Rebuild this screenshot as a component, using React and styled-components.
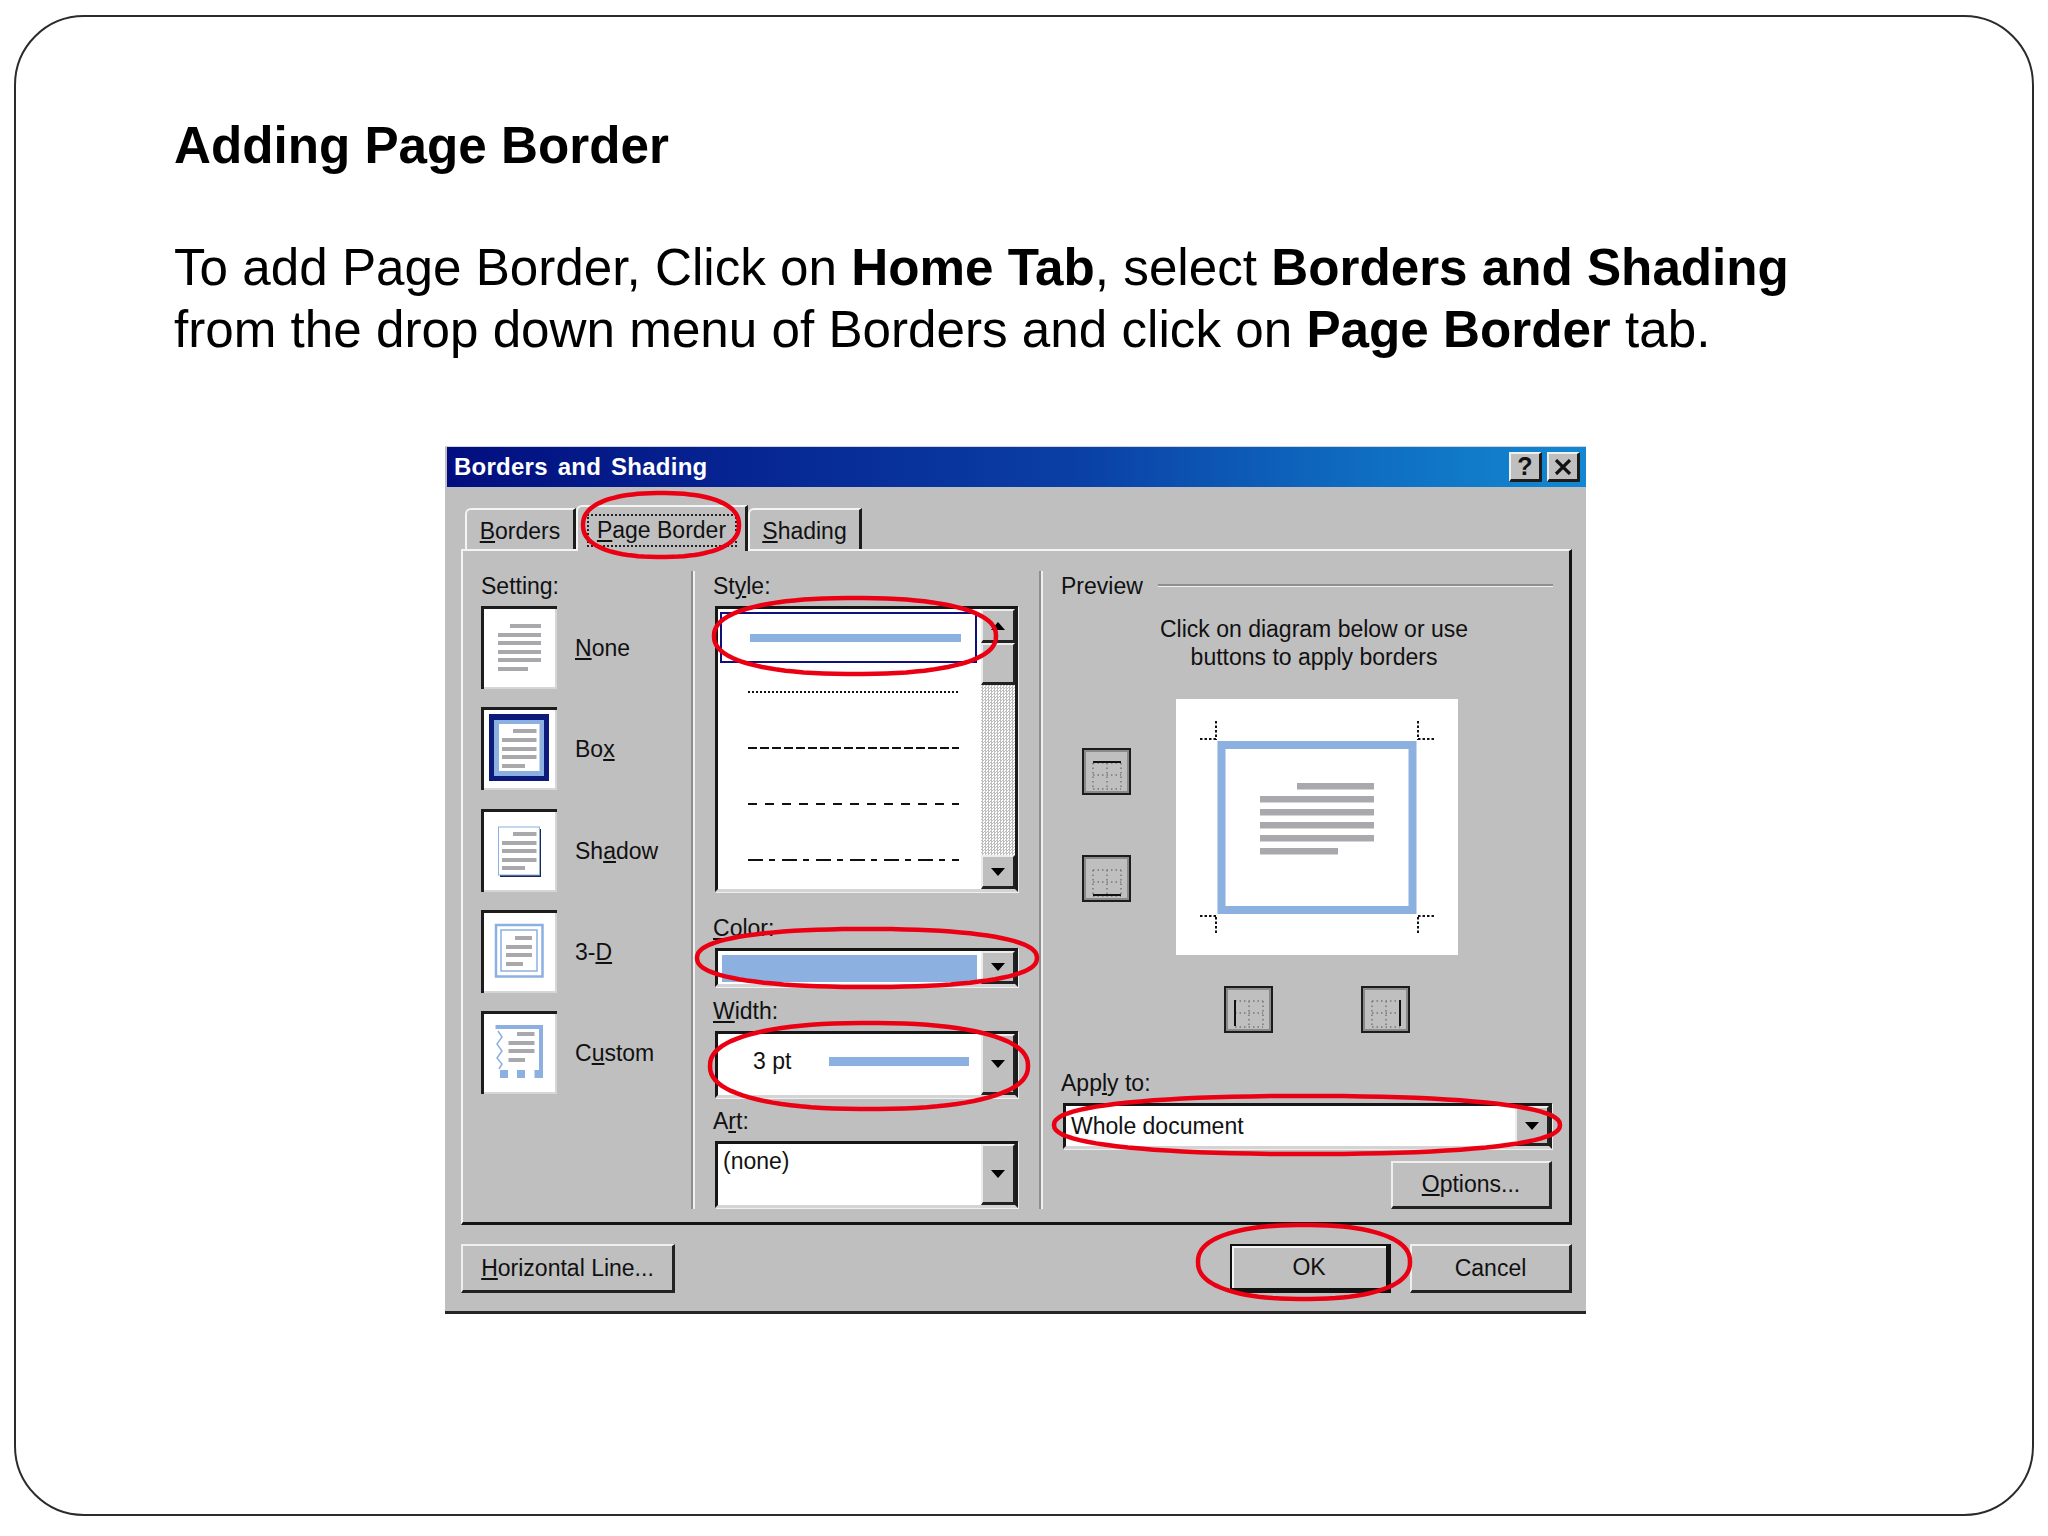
import styled, { createGlobalStyle } from 'styled-components';

const GREY = '#bfbfc0';
const BLUE = '#8cb0e0';
const LINE = '#a9a9ad';

const Global = createGlobalStyle`
  html, body { margin: 0; padding: 0; background: #fff; }
  body { font-family: "Liberation Sans", Arial, sans-serif; color: #000; }
  * { box-sizing: border-box; }
`;

const Page = styled.div`
  width: 2048px;
  height: 1536px;
  padding: 15px 14px 20px;
`;

const Slide = styled.div`
  height: 100%;
  border: 2px solid #2b2b2b;
  border-radius: 70px;
  padding: 98px 0 0 158px;
`;

const Heading = styled.h1`
  margin: 0;
  font-size: 51.2px;
  line-height: 61px;
  font-weight: 700;
`;

const Para = styled.p`
  margin: 61px 0 0;
  font-size: 51.2px;
  line-height: 61.5px;
  white-space: nowrap;
`;

const Dialog = styled.div`
  position: relative;
  width: 1141px;
  height: 868px;
  margin: 86px 0 0 271px;
  padding-left: 2px;
  background: ${GREY};
  border-top: 1px solid #d4d4d4;
  border-bottom: 3px solid #26262a;
  display: flex;
  flex-direction: column;
  font-size: 23px;
  color: #111;
  u { text-underline-offset: 2px; text-decoration-thickness: 2px; }
`;

const TitleBar = styled.div`
  height: 40px;
  flex: none;
  display: flex;
  align-items: center;
  justify-content: space-between;
  padding: 0 6px 0 7px;
  background: linear-gradient(90deg, #020e80 0%, #0a3fa6 55%, #0f6cc0 80%, #1288d2 100%);
`;

const TitleText = styled.span`
  color: #fff;
  font-weight: 700;
  font-size: 24px;
  letter-spacing: 0.25px;
  word-spacing: 3px;
`;

const TitleButtons = styled.div`
  display: flex;
  gap: 5px;
`;

const TitleButton = styled.div`
  width: 33px;
  height: 30px;
  display: flex;
  align-items: center;
  justify-content: center;
  background: ${GREY};
  border-top: 2px solid #efefef;
  border-left: 2px solid #efefef;
  border-right: 3px solid #1c1c1c;
  border-bottom: 3px solid #1c1c1c;
  font-weight: 700;
  font-size: 25px;
  color: #111;
`;

const TabRow = styled.div`
  height: 44px;
  margin-top: 18px;
  padding-left: 18px;
  display: flex;
  align-items: flex-end;
  flex: none;
`;

const Tab = styled.div`
  position: relative;
  z-index: ${p => (p.$active ? 2 : 0)};
  width: ${p => p.$w}px;
  height: ${p => (p.$active ? 46 : 41)}px;
  margin-bottom: ${p => (p.$active ? -2 : 0)}px;
  display: flex;
  align-items: center;
  justify-content: center;
  background: ${GREY};
  border-top: 2px solid #f4f4f4;
  border-left: 2px solid #f4f4f4;
  border-right: 3px solid #1c1c1c;
  border-top-left-radius: 6px;
  padding-top: 3px;
`;

const TabFocus = styled.span`
  width: 150px;
  height: 33px;
  display: flex;
  align-items: center;
  justify-content: center;
  border: 2px dotted #222;
`;

const Panel = styled.div`
  margin-left: 14px;
  width: 1111px;
  height: 676px;
  flex: none;
  padding: 20px 0 13px;
  border-top: 2px solid #f4f4f4;
  border-left: 2px solid #f4f4f4;
  border-right: 3px solid #141414;
  border-bottom: 3px solid #141414;
  display: grid;
  grid-template-columns: 230px 348px 1fr;
`;

const Column = styled.div`
  display: flex;
  flex-direction: column;
  padding-left: ${p => p.$pad}px;
  border-right: ${p => (p.$divider ? '2px solid #8e8e8e' : 'none')};
  box-shadow: ${p => (p.$divider ? '2px 0 0 #f0f0f0' : 'none')};
`;

const Label = styled.div`
  height: 28px;
  line-height: 28px;
  white-space: nowrap;
  flex: none;
  padding-top: 1px;
`;

const SettingList = styled.div`
  margin-top: 7px;
  display: flex;
  flex-direction: column;
  gap: 18.3px;
`;

const SettingRow = styled.div`
  display: flex;
  align-items: center;
  gap: 18px;
`;

const SettingName = styled.span`
  padding-top: 2px;
`;

const Thumb = styled.div`
  width: 76px;
  height: 83px;
  background: #fff;
  box-shadow: inset 3px 3px 0 #1c1c1c, inset -2px -2px 0 #d6d6d6;
  svg { display: block; }
`;

const Field = styled.div`
  display: flex;
  flex-direction: column;
  gap: 7px;
  margin-top: ${p => p.$top || 0}px;
`;

const Sunken = styled.div`
  position: relative;
  width: ${p => p.$w || 303}px;
  height: ${p => p.$h}px;
  margin-left: 2px;
  display: flex;
  background: #fff;
  border: 3px solid #161616;
  border-bottom-color: #d4d4d4;
  border-right-color: #1c1c1c;
  box-shadow: 1px 1px 0 #efefef;
`;

const ListBody = styled.div`
  flex: 1;
  min-width: 0;
  padding: 3px 0 0 2px;
  display: flex;
  flex-direction: column;
`;

const StyleItem = styled.div`
  height: ${p => p.$h}px;
  width: 257px;
  display: flex;
  align-items: center;
  padding-left: 28px;
  border: ${p => (p.$selected ? '2px solid #10107a' : 'none')};
`;

const StyleSample = styled.div`
  width: 211px;
  ${p => p.$solid
    ? `height: 8px; background: ${BLUE};`
    : `height: 2px; background: repeating-linear-gradient(90deg, #111 0 ${p.$on}px, transparent ${p.$on}px ${p.$on + p.$off}px);`}
`;

const MixedDash = styled.div`
  width: 211px;
  height: 2px;
  background: repeating-linear-gradient(90deg, #111 0 15px, transparent 15px 21px, #111 21px 27px, transparent 27px 34px);
`;

const ArrowButton = styled.div`
  width: 34px;
  height: ${p => p.$h ? `${p.$h}px` : 'auto'};
  flex: none;
  display: flex;
  align-items: center;
  justify-content: center;
  background: ${GREY};
  border-top: 2px solid #ececec;
  border-left: 2px solid #ececec;
  border-right: 2px solid #222;
  border-bottom: 3px solid #222;
  &::after {
    content: "";
    border-left: 7.5px solid transparent;
    border-right: 7.5px solid transparent;
    ${p => (p.$up ? 'border-bottom: 8px solid #000;' : 'border-top: 8px solid #000;')}
  }
`;

const ScrollBar = styled.div`
  width: 34px;
  flex: none;
  display: flex;
  flex-direction: column;
`;

const ScrollThumb = styled.div`
  height: 42px;
  flex: none;
  background: ${GREY};
  border-top: 2px solid #ececec;
  border-left: 2px solid #ececec;
  border-right: 2px solid #222;
  border-bottom: 3px solid #222;
`;

const ScrollTrack = styled.div`
  flex: 1;
  background: repeating-conic-gradient(#bdbdbd 0 25%, #fff 0 50%) 0 0 / 3px 3px;
`;

const ComboValue = styled.div`
  flex: 1;
  min-width: 0;
  display: flex;
  align-items: ${p => (p.$top ? 'flex-start' : 'center')};
  padding: ${p => p.$pad || '0'};
`;

const Swatch = styled.div`
  flex: 1;
  height: 27px;
  margin: 4px 4px 0 4px;
  background: ${BLUE};
`;

const WidthText = styled.span`
  width: 76px;
  flex: none;
`;

const WidthLine = styled.div`
  width: 140px;
  height: 9px;
  background: ${BLUE};
`;

const PreviewHead = styled.div`
  display: flex;
  align-items: center;
  gap: 15px;
  width: 492px;
`;

const Rule = styled.div`
  flex: 1;
  height: 2px;
  background: #8e8e8e;
  box-shadow: 0 1px 0 #f0f0f0;
`;

const HelpText = styled.div`
  width: 506px;
  margin-top: 16px;
  text-align: center;
  line-height: 28px;
`;

const Stage = styled.div`
  display: flex;
  margin-top: 28px;
`;

const SideButtons = styled.div`
  width: 115px;
  padding: 49px 0 0 21px;
  display: flex;
  flex-direction: column;
  gap: 60px;
`;

const BorderButton = styled.div`
  width: 49px;
  height: 47px;
  background: ${GREY};
  border: 2px solid #1c1c1c;
  box-shadow: inset 0 0 0 2px #8a8a8a;
  svg { display: block; }
`;

const PreviewBox = styled.div`
  width: 282px;
  height: 256px;
  background: #fff;
  svg { display: block; }
`;

const BottomButtons = styled.div`
  display: flex;
  gap: 88px;
  margin: 31px 0 0 163px;
`;

const ApplyField = styled(Field)`
  margin-top: 35px;
`;

const PushButton = styled.div`
  width: ${p => p.$w}px;
  height: ${p => p.$h || 49}px;
  flex: none;
  display: flex;
  align-items: center;
  justify-content: center;
  background: ${GREY};
  border-top: 2px solid #efefef;
  border-left: 2px solid #efefef;
  border-right: 3px solid #222;
  border-bottom: 3px solid #222;
  ${p => p.$default && `
    border: 2px solid #111;
    border-right-width: 5px;
    border-bottom-width: 5px;
    box-shadow: inset 2px 2px 0 #f4f4f4;
  `}
`;

const OptionsButton = styled(PushButton)`
  margin: 12px 0 0 330px;
`;

const Footer = styled.div`
  padding: 19px 0 0 14px;
  width: 1125px;
  display: flex;
  gap: 19px;
`;

const FooterGap = styled.div`
  flex: 1;
`;

const Rings = styled.svg`
  position: absolute;
  left: 0;
  top: -1px;
  pointer-events: none;
  z-index: 5;
`;

// grey text lines inside the little page thumbnails
const DocLines = ({ x1, x2, first, last, ys, h = 4 }) =>
  ys.map((y, i) => {
    const from = i === 0 ? first : x1;
    const to = i === ys.length - 1 ? last : x2;
    return <rect key={y} x={from} y={y} width={to - from} height={h} fill={LINE} />;
  });

const NoneArt = () => (
  <svg width="76" height="83">
    <DocLines x1={17} x2={60} first={29} last={47} ys={[18, 27, 35, 44, 52, 61]} />
  </svg>
);

const BoxArt = () => (
  <svg width="76" height="83">
    <rect x="8" y="7" width="60" height="67" fill="#0c1a7c" />
    <rect x="13" y="13" width="50" height="56" fill={BLUE} />
    <rect x="18" y="17" width="40.5" height="47" fill="#fff" />
    <DocLines x1={21} x2={55.5} first={32} last={44} ys={[22, 31, 40, 48, 57]} />
  </svg>
);

const ShadowArt = () => (
  <svg width="76" height="83">
    <rect x="19" y="20" width="41" height="48" fill="#1c2a50" />
    <rect x="17.5" y="18" width="41" height="48" fill="#fff" stroke={BLUE} />
    <DocLines x1={21} x2={55.5} first={32} last={44} ys={[23, 32, 40, 49, 57]} />
  </svg>
);

const ThreeDArt = () => (
  <svg width="76" height="83">
    <rect x="15" y="15" width="46.5" height="51.5" fill="#fff" stroke={BLUE} strokeWidth="2.5" />
    <rect x="20" y="20" width="36" height="41" fill="#fff" stroke={BLUE} strokeWidth="1.5" />
    <DocLines x1={25} x2={51} first={34} last={42} ys={[26, 35, 43, 52]} />
  </svg>
);

const CustomArt = () => (
  <svg width="76" height="83">
    <rect x="14.5" y="14" width="47.5" height="4" fill={BLUE} />
    <rect x="58" y="14" width="4" height="50" fill={BLUE} />
    <path d="M17 20l4 6-5 7 5 7-5 7 5 6-3 5" fill="none" stroke={BLUE} strokeWidth="1.5" />
    <rect x="19" y="59" width="8" height="8" fill={BLUE} />
    <rect x="36" y="59" width="8" height="8" fill={BLUE} />
    <rect x="53.5" y="59" width="8.5" height="8" fill={BLUE} />
    <DocLines x1={27.5} x2={53.5} first={36} last={44} ys={[21, 30, 38, 47]} />
  </svg>
);

const EDGE = {
  top: 'M11 12H39',
  bottom: 'M11 38H39',
  left: 'M11 12V38',
  right: 'M39 12V38',
};

const EdgeIcon = ({ side }) => (
  <svg width="45" height="43" viewBox="0 0 45 43">
    <g transform="translate(-3 -1)">
      <path
        d="M12 14H40M12 26H40M12 40H40M12 14V40M26 14V40M40 14V40"
        fill="none"
        stroke="#77777a"
        strokeWidth="1.5"
        strokeDasharray="1.5 3"
      />
      <path d={EDGE[side]} transform="translate(1 1)" fill="none" stroke="#111" strokeWidth="2" />
    </g>
  </svg>
);

const CROPS = [
  'M40 22V41M40 40H23',
  'M242 22V41M242 40H259',
  'M40 234V217M40 217H23',
  'M242 234V217M242 217H259',
];

const PreviewArt = () => (
  <svg width="282" height="256">
    {CROPS.map(d => (
      <path key={d} d={d} fill="none" stroke="#111" strokeWidth="2" strokeDasharray="2.5 2" />
    ))}
    <rect x="45.5" y="46" width="191" height="165" fill="#fff" stroke={BLUE} strokeWidth="8" />
    <DocLines x1={84} x2={198} first={121} last={162} ys={[84, 97, 110, 123, 136, 149]} h={6.5} />
  </svg>
);

const SETTINGS = [
  { name: <><u>N</u>one</>, art: <NoneArt /> },
  { name: <>Bo<u>x</u></>, art: <BoxArt /> },
  { name: <>Sh<u>a</u>dow</>, art: <ShadowArt /> },
  { name: <>3-<u>D</u></>, art: <ThreeDArt /> },
  { name: <>C<u>u</u>stom</>, art: <CustomArt /> },
];

const RINGS = [
  [216, 79, 78, 32],
  [410, 190, 141, 38],
  [422, 512, 170, 29],
  [424, 620, 159, 43],
  [862, 679, 253, 29],
  [859, 816, 106, 37],
];

// the marker rings are a bit squarer than a true ellipse
const ringPath = ([cx, cy, rx, ry]) => {
  const pts = [];
  for (let a = 0; a < 360; a += 4) {
    const t = (a * Math.PI) / 180;
    const c = Math.cos(t);
    const s = Math.sin(t);
    const x = cx + rx * Math.sign(c) * Math.abs(c) ** 0.86;
    const y = cy + ry * Math.sign(s) * Math.abs(s) ** 0.86;
    pts.push(`${x.toFixed(1)} ${y.toFixed(1)}`);
  }
  return `M${pts.join('L')}Z`;
};

const App = () => (
  <>
    <Global />
    <Page>
      <Slide>
        <Heading>Adding Page Border</Heading>
        <Para>
          To add Page Border, Click on <b>Home Tab</b>, select <b>Borders and Shading</b>
          <br />
          from the drop down menu of Borders and click on <b>Page Border</b> tab.
        </Para>
        <Dialog>
          <TitleBar>
            <TitleText>Borders and Shading</TitleText>
            <TitleButtons>
              <TitleButton>?</TitleButton>
              <TitleButton>
                <svg width="18" height="16" viewBox="0 0 18 16">
                  <path d="M2 1l14 14M16 1L2 15" stroke="#111" strokeWidth="3.2" fill="none" />
                </svg>
              </TitleButton>
            </TitleButtons>
          </TitleBar>

          <TabRow>
            <Tab $w={111}><span><u>B</u>orders</span></Tab>
            <Tab $w={172} $active><TabFocus><span><u>P</u>age Border</span></TabFocus></Tab>
            <Tab $w={114}><span><u>S</u>hading</span></Tab>
          </TabRow>

          <Panel>
            <Column $pad={18} $divider>
              <Label>Setting:</Label>
              <SettingList>
                {SETTINGS.map((s, i) => (
                  <SettingRow key={i}>
                    <Thumb>{s.art}</Thumb>
                    <SettingName>{s.name}</SettingName>
                  </SettingRow>
                ))}
              </SettingList>
            </Column>

            <Column $pad={20} $divider>
              <Field>
                <Label>St<u>y</u>le:</Label>
                <Sunken $h={286}>
                  <ListBody>
                    <StyleItem $selected $h={51}><StyleSample $solid /></StyleItem>
                    <StyleItem $h={57}><StyleSample $on={2} $off={2} /></StyleItem>
                    <StyleItem $h={56}><StyleSample $on={9} $off={3} /></StyleItem>
                    <StyleItem $h={56}><StyleSample $on={9} $off={8} /></StyleItem>
                    <StyleItem $h={56}><MixedDash /></StyleItem>
                  </ListBody>
                  <ScrollBar>
                    <ArrowButton $up $h={34} />
                    <ScrollThumb />
                    <ScrollTrack />
                    <ArrowButton $h={34} />
                  </ScrollBar>
                </Sunken>
              </Field>
              <Field $top={21}>
                <Label><u>C</u>olor:</Label>
                <Sunken $h={39}>
                  <Swatch />
                  <ArrowButton />
                </Sunken>
              </Field>
              <Field $top={9}>
                <Label><u>W</u>idth:</Label>
                <Sunken $h={67}>
                  <ComboValue $pad="0 0 6px 35px">
                    <WidthText>3 pt</WidthText>
                    <WidthLine />
                  </ComboValue>
                  <ArrowButton />
                </Sunken>
              </Field>
              <Field $top={8}>
                <Label>A<u>r</u>t:</Label>
                <Sunken $h={67}>
                  <ComboValue $top $pad="4px 0 0 5px">(none)</ComboValue>
                  <ArrowButton />
                </Sunken>
              </Field>
            </Column>

            <Column $pad={20}>
              <PreviewHead>
                <Label>Preview</Label>
                <Rule />
              </PreviewHead>
              <HelpText>
                Click on diagram below or use
                <br />
                buttons to apply borders
              </HelpText>
              <Stage>
                <SideButtons>
                  <BorderButton><EdgeIcon side="top" /></BorderButton>
                  <BorderButton><EdgeIcon side="bottom" /></BorderButton>
                </SideButtons>
                <PreviewBox><PreviewArt /></PreviewBox>
              </Stage>
              <BottomButtons>
                <BorderButton><EdgeIcon side="left" /></BorderButton>
                <BorderButton><EdgeIcon side="right" /></BorderButton>
              </BottomButtons>
              <ApplyField>
                <Label>App<u>l</u>y to:</Label>
                <Sunken $w={489} $h={46}>
                  <ComboValue $pad="0 0 0 5px">Whole document</ComboValue>
                  <ArrowButton />
                </Sunken>
              </ApplyField>
              <OptionsButton $w={161} $h={48}><span><u>O</u>ptions...</span></OptionsButton>
            </Column>
          </Panel>

          <Footer>
            <PushButton $w={214}><span><u>H</u>orizontal Line...</span></PushButton>
            <FooterGap />
            <PushButton $w={161} $default>OK</PushButton>
            <PushButton $w={162}>Cancel</PushButton>
          </Footer>

          <Rings width="1141" height="868">
            {RINGS.map(r => (
              <path key={r[0] + r[1]} d={ringPath(r)} fill="none" stroke="#ea0012" strokeWidth="4.5" />
            ))}
          </Rings>
        </Dialog>
      </Slide>
    </Page>
  </>
);

export default App;
